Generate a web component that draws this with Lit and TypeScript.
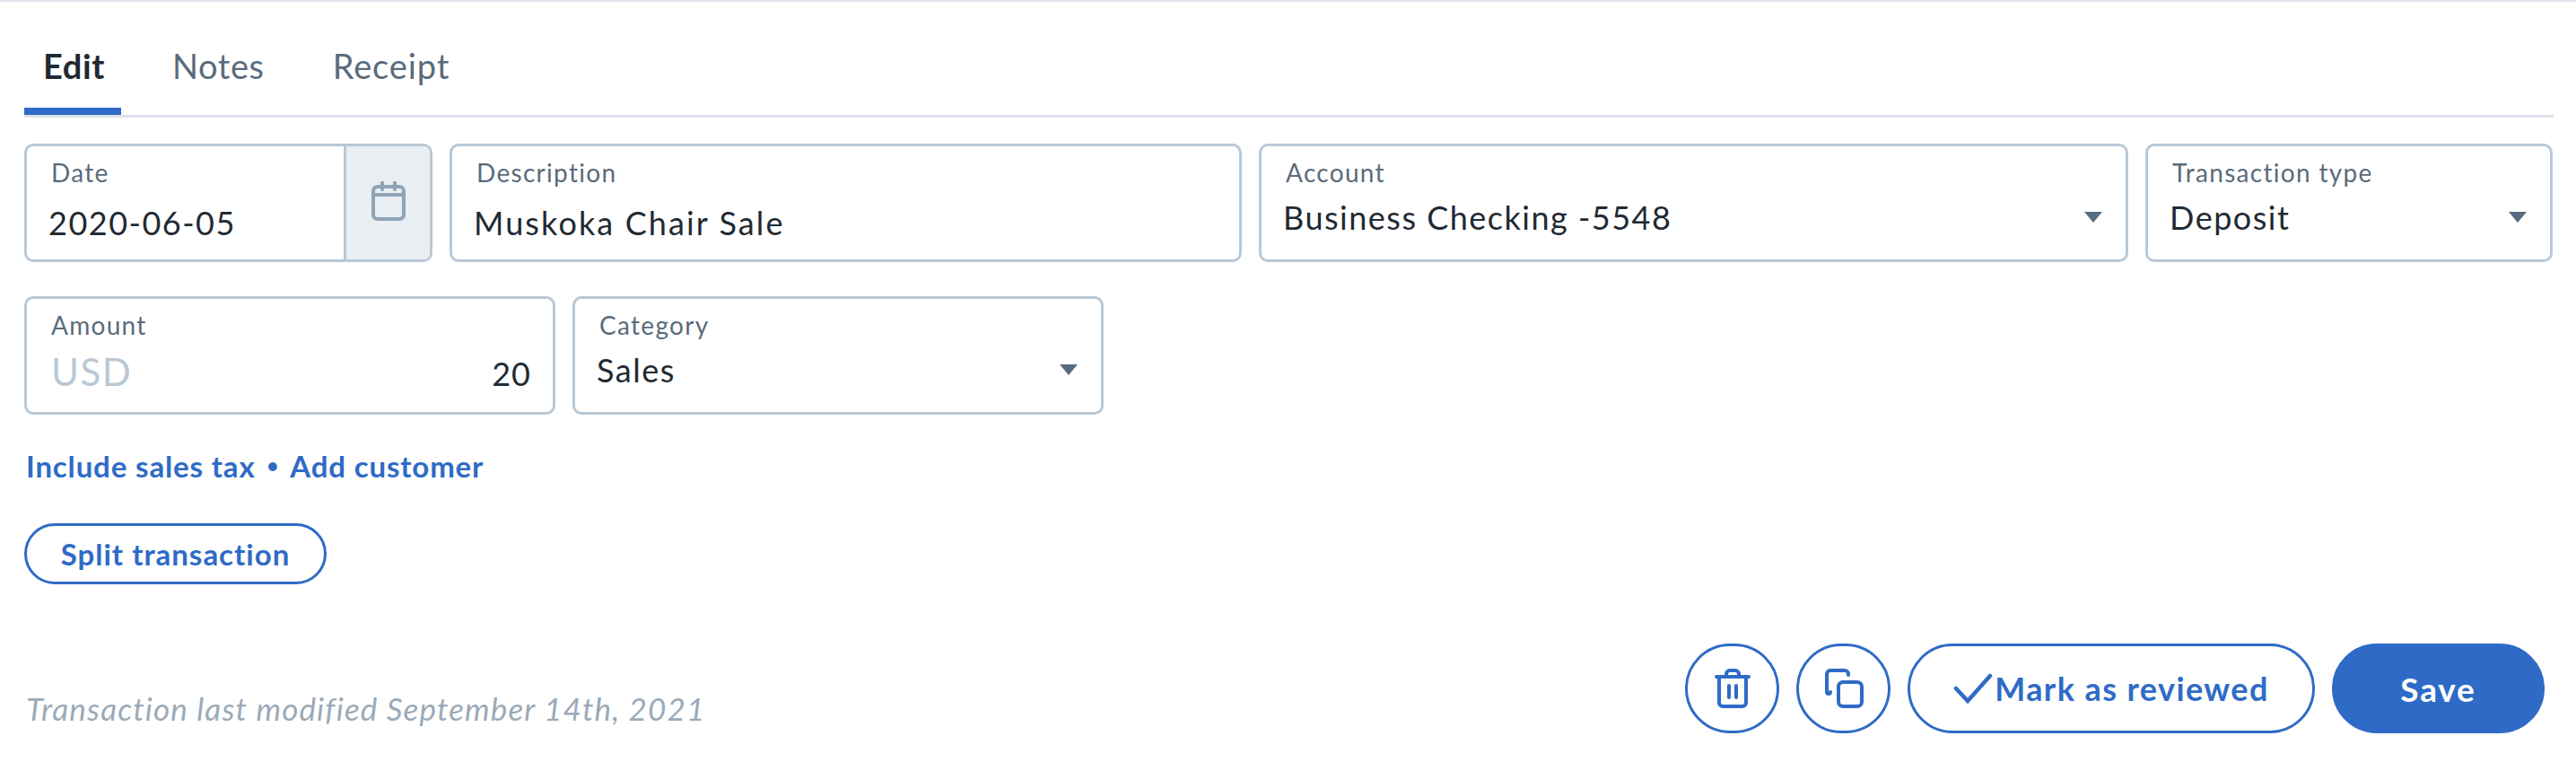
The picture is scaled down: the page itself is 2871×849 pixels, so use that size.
import { LitElement, html, css, svg } from "lit";
import { customElement } from "lit/decorators.js";

const caret = html`<svg class="caret" viewBox="0 0 20 12"><path d="M0 0H20L10 12Z" fill="currentColor"/></svg>`;

@customElement("app-root")
export class AppRoot extends LitElement {
  static styles = css`
    :host { display: block; height: 849px; overflow: hidden; background: #fff; font-family: Lato, "Noto Sans", sans-serif; color: #1f2a33; }
    * { box-sizing: border-box; }
    .topline { height: 2px; background: #e1e7ee; }
    .page { padding: 0 25px 0 27px; }
    .tabs { display: flex; height: 129px; padding-top: 47px; border-bottom: 3px solid #dbe2ea; margin-bottom: 29px; }
    .tab { font-size: 38px; letter-spacing: 0.6px; line-height: 48px; color: #5a6b7b; padding: 0 21px; margin-right: 34px; }
    .tab.active { font-weight: 700; color: #1f2a33; border-bottom: 8px solid #2f6bc6; width: 108px; padding: 0 0 0 21px; margin-right: 36px; }
    .tab.last { letter-spacing: 0.9px; }
    .row { display: flex; gap: 19px; }
    .row + .row { margin-top: 38px; }
    .field { height: 132px; border: 3px solid #b9c8d6; border-radius: 10px; display: flex; background: #fff; overflow: hidden; }
    .w-date { width: 455px; } .w-desc { width: 883px; } .w-acct { width: 969px; } .w-type { width: 454px; }
    .w-amt { width: 592px; } .w-cat { width: 592px; }
    .inner { flex: 1; min-width: 0; padding: 14px 24px 0 27px; display: flex; flex-direction: column; }
    .label { font-size: 28px; letter-spacing: 1.3px; line-height: 31px; height: 30px; color: #5a6b7b; }
    .value { font-size: 36px; letter-spacing: 1.5px; line-height: 42px; margin-top: 20px; margin-left: -3px; }
    .value.wide { letter-spacing: 2.1px; }
    .select .value { margin-top: 14px; }
    .sel-row { display: flex; align-items: center; justify-content: space-between; }
    .caret { width: 20px; height: 12px; color: #566b7d; margin-right: 2px; margin-top: 14px; flex: none; }
    .addon { width: 96px; background: #e9eef2; border-left: 3px solid #b9c8d6; display: flex; align-items: center; justify-content: center; flex: none; }
    .addon svg { width: 38px; height: 44px; margin: 0 0 4px 1px; }
    .amt-row { display: flex; justify-content: space-between; align-items: baseline; margin-top: 12px; }
    .usd { font-size: 42px; letter-spacing: 1.5px; line-height: 50px; color: #b9c8d6; }
    .amt { font-size: 36px; letter-spacing: 1px; line-height: 50px; }
    .links { display: flex; align-items: center; gap: 13px; margin-top: 35px; font-size: 33px; letter-spacing: 0.85px; font-weight: 700; line-height: 44px; color: #2f6bc6; padding-left: 2px; }
    .dot { font-size: 22px; letter-spacing: 0; }
    .btn { display: inline-flex; align-items: center; justify-content: center; border: 3px solid #2f6bc6; border-radius: 60px; background: #fff; color: #2f6bc6; font: 700 33px Lato, sans-serif; letter-spacing: 1px; padding: 0; }
    .split { width: 337px; height: 68px; margin-top: 42px; }
    .footer { display: flex; justify-content: space-between; align-items: flex-end; margin-top: 66px; }
    .meta { font-style: italic; font-size: 35px; letter-spacing: 1.15px; line-height: 44px; color: #9aaab8; padding-left: 2px; margin-bottom: 6px; }
    .actions { display: flex; gap: 19px; margin-right: 10px; }
    .actions .btn { height: 100px; font-size: 36px; letter-spacing: 1.4px; }
    .actions .save { font-size: 37px; letter-spacing: 1.8px; }
    .icon { width: 105px; }
    .icon svg { width: 44px; height: 44px; }
    .mark { width: 454px; gap: 2px; }
    .mark svg { width: 44px; height: 34px; }
    .save { width: 237px; background: #2f6bc6 !important; color: #fff !important; }
  `;

  render() {
    return html`
      <div class="topline"></div>
      <div class="page">
        <div class="tabs">
          <div class="tab active">Edit</div>
          <div class="tab">Notes</div>
          <div class="tab last">Receipt</div>
        </div>
        <div class="row">
          <div class="field w-date">
            <div class="inner"><div class="label">Date</div><div class="value">2020-06-05</div></div>
            <div class="addon">
              <svg viewBox="0 0 38 44" fill="none" stroke="#8fa3b5" stroke-width="4" stroke-linecap="round"><rect x="2" y="6" width="34" height="36" rx="5"/><path d="M2 15H36M12 1.5V9M26 1.5V9"/></svg>
            </div>
          </div>
          <div class="field w-desc"><div class="inner"><div class="label">Description</div><div class="value wide">Muskoka Chair Sale</div></div></div>
          <div class="field w-acct select"><div class="inner"><div class="label">Account</div><div class="sel-row"><div class="value">Business Checking -5548</div>${caret}</div></div></div>
          <div class="field w-type select"><div class="inner"><div class="label">Transaction type</div><div class="sel-row"><div class="value">Deposit</div>${caret}</div></div></div>
        </div>
        <div class="row">
          <div class="field w-amt"><div class="inner"><div class="label">Amount</div><div class="amt-row"><span class="usd">USD</span><span class="amt">20</span></div></div></div>
          <div class="field w-cat select"><div class="inner"><div class="label">Category</div><div class="sel-row"><div class="value">Sales</div>${caret}</div></div></div>
        </div>
        <div class="links"><span>Include sales tax</span><span class="dot">•</span><span>Add customer</span></div>
        <button class="btn split">Split transaction</button>
        <div class="footer">
          <div class="meta">Transaction last modified September 14th, 2021</div>
          <div class="actions">
            <button class="btn icon"><svg viewBox="0 0 44 44" fill="none" stroke="#2f6bc6" stroke-width="4" stroke-linecap="round" stroke-linejoin="round">${svg`<path d="M4 9H40M15 9V6a4 4 0 0 1 4-4h6a4 4 0 0 1 4 4v3M7 9V38a4 4 0 0 0 4 4H33a4 4 0 0 0 4-4V9M18 19V32M26 19V32"/>`}</svg></button>
            <button class="btn icon"><svg viewBox="0 0 44 44" fill="none" stroke="#2f6bc6" stroke-width="4" stroke-linecap="round" stroke-linejoin="round">${svg`<path d="M27 7V6a4 4 0 0 0-4-4H7a4 4 0 0 0-4 4V26a2 2 0 0 0 4 0"/><rect x="16" y="15" width="26" height="27" rx="5"/>`}</svg></button>
            <button class="btn mark"><svg viewBox="0 0 44 34" fill="none" stroke="#2f6bc6" stroke-width="4.5" stroke-linecap="round" stroke-linejoin="miter">${svg`<path d="M3 17L16 31L41 3"/>`}</svg>Mark as reviewed</button>
            <button class="btn save">Save</button>
          </div>
        </div>
      </div>
    `;
  }
}
